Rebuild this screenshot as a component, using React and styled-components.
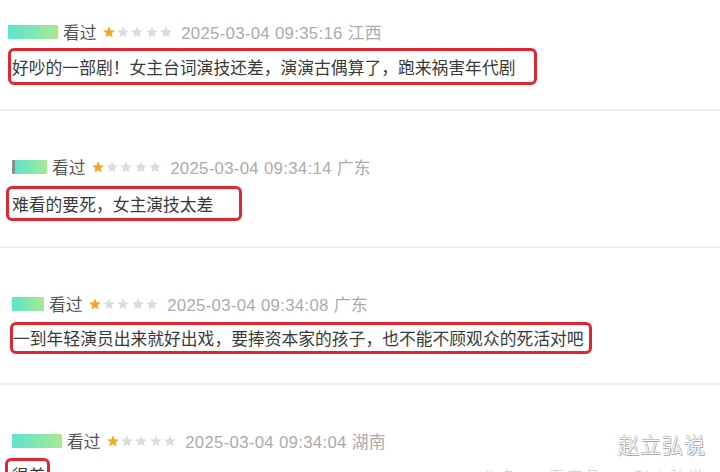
import styled, { createGlobalStyle } from "styled-components";

/* Data ---------------------------*/
const reviews = [
    {
        mask: { w: 50, x: 8, dot: false },
        time: "2025-03-04 09:35:16",
        place: "江西",
        text: "好吵的一部剧！女主台词演技还差，演演古偶算了，跑来祸害年代剧",
        top: 22,
        gap: 6,
        box: { x: 8, w: 529, h: 37 },
        after: 24,
    },
    {
        mask: { w: 32, x: 12, dot: true },
        time: "2025-03-04 09:34:14",
        place: "广东",
        text: "难看的要死，女主演技太差",
        top: 46,
        gap: 9,
        box: { x: 6, w: 236, h: 35 },
        after: 25,
    },
    {
        mask: { w: 32, x: 12, dot: false },
        time: "2025-03-04 09:34:08",
        place: "广东",
        text: "一到年轻演员出来就好出戏，要捧资本家的孩子，也不能不顾观众的死活对吧",
        top: 46,
        gap: 8,
        box: { x: 10, w: 582, h: 32 },
        after: 29,
    },
    {
        mask: { w: 50, x: 12, dot: false },
        time: "2025-03-04 09:34:04",
        place: "湖南",
        text: "很差",
        top: 46,
        gap: 7,
        box: { x: 5, w: 45, h: 34 },
        after: 0,
    },
];

const Star = ({ on }) => (
    <svg width="14" height="14" viewBox="0 0 24 24">
        <path
            d="M12 2.2l2.9 6.6 7.1.6-5.4 4.7 1.6 7-6.2-3.7-6.2 3.7 1.6-7L2 9.4l7.1-.6z"
            fill={on ? "#f6a623" : "#dcdcdc"}
        />
    </svg>
);

const App = () => {
    return (
        <Page>
            <GlobalStyle />
            {reviews.map((r, i) => (
                <div key={i}>
                    <Review $top={r.top}>
                        <Header>
                            <Mask $w={r.mask.w} $x={r.mask.x} $dot={r.mask.dot} />
                            <Seen>看过</Seen>
                            <Stars>
                                {[0, 1, 2, 3, 4].map((s) => (
                                    <Star key={s} on={s === 0} />
                                ))}
                            </Stars>
                            <Meta>
                                {r.time} {r.place}
                            </Meta>
                        </Header>
                        <Box $gap={r.gap} $x={r.box.x} $w={r.box.w} $h={r.box.h}>
                            {r.text}
                        </Box>
                    </Review>
                    {r.after > 0 && <Divider $top={r.after} />}
                </div>
            ))}
            <Watermark>
                赵立弘说
                <small>头条 · 百家号 · 赵立弘说</small>
            </Watermark>
        </Page>
    );
};

export default App;

const GlobalStyle = createGlobalStyle`
    html, body {
        margin: 0;
        padding: 0;
        background: #ffffff;
    }
    body {
        width: 720px;
        height: 472px;
        overflow: hidden;
        font-family: "Liberation Sans", "Noto Sans CJK SC", sans-serif;
    }
`;

const Page = styled.div`
    position: relative;
    width: 720px;
    height: 472px;
    overflow: hidden;
    background: #ffffff;
`;

const Review = styled.div`
    padding-top: ${(p) => p.$top}px;
`;

const Header = styled.div`
    display: flex;
    align-items: center;
    height: 20px;
    font-size: 16.8px;
`;

const Mask = styled.div`
    width: ${(p) => p.$w}px;
    height: 14px;
    margin-left: ${(p) => p.$x}px;
    margin-right: 5px;
    border-radius: 1px;
    background: linear-gradient(90deg, #5fe4ca 0%, #84e6b0 55%, #a9e890 100%);
    border-left: ${(p) => (p.$dot ? "3px solid #8a8f8e" : "none")};
`;

const Seen = styled.span`
    color: #555555;
    margin-right: 5px;
`;

const Stars = styled.span`
    display: flex;
    align-items: center;
    gap: 0.4px;
    margin-right: 8px;
    svg {
        display: block;
    }
`;

const Meta = styled.span`
    color: #ababab;
    letter-spacing: 0.3px;
`;

const Box = styled.div`
    box-sizing: border-box;
    margin-top: ${(p) => p.$gap}px;
    margin-left: ${(p) => p.$x}px;
    width: ${(p) => p.$w}px;
    height: ${(p) => p.$h}px;
    padding-left: ${(p) => 12 - p.$x - 3}px;
    display: flex;
    align-items: center;
    border: 3px solid #e3262e;
    border-radius: 6px;
    color: #3a3a3a;
    font-size: 16.8px;
    white-space: nowrap;
`;

const Divider = styled.div`
    margin-top: ${(p) => p.$top}px;
    height: 2px;
    background: #efefef;
`;

const Watermark = styled.div`
    position: absolute;
    right: 14px;
    top: 429px;
    display: flex;
    flex-direction: column;
    align-items: flex-end;
    font-family: "Noto Sans CJK SC", sans-serif;
    font-size: 21px;
    font-weight: 300;
    letter-spacing: 1px;
    color: #ffffff;
    text-shadow: 1px 1px 0 #a8a8a8, -0.6px -0.6px 0 #c4c4c4, 0.6px -0.6px 0 #c4c4c4,
        -0.6px 0.6px 0 #c4c4c4;

    small {
        margin-top: 6px;
        font-size: 15px;
        text-shadow: none;
        color: #cfcfcf;
        letter-spacing: 3px;
    }
`;
